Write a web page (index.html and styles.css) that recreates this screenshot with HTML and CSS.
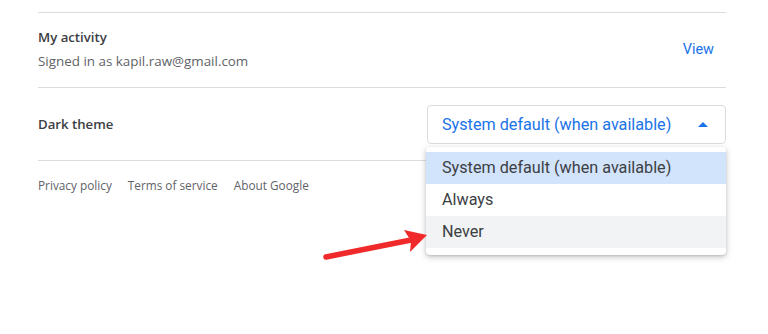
FILE: index.html
```html
<!DOCTYPE html>
<html lang="en">
<head>
  <meta charset="UTF-8" />
  <title>Settings</title>
  <link rel="stylesheet" href="styles.css">
</head>
<body>

<div class="page">
  <div class="row activity">
    <div class="info">
      <div class="title">My activity</div>
      <div class="sub">Signed in as kapil.raw@gmail.com</div>
    </div>
    <a class="link">View</a>
  </div>

  <div class="row theme">
    <div class="title">Dark theme</div>
    <div class="select-wrap">
      <div class="select">
        <span>System default (when available)</span>
        <span class="caret"></span>
      </div>
      <ul class="menu">
        <li class="selected">System default (when available)</li>
        <li>Always</li>
        <li class="hover">Never</li>
      </ul>
    </div>
  </div>

  <div class="footer">
    <a>Privacy policy</a>
    <a>Terms of service</a>
    <a>About Google</a>
  </div>

  <svg class="pointer" width="110" height="40" viewBox="0 0 110 40">
    <line x1="3" y1="32" x2="88" y2="15" stroke="#f02a2a" stroke-width="5.5" stroke-linecap="round"/>
    <polygon points="81,5 104,10 87,27 88,16" fill="#f02a2a"/>
  </svg>
</div>

</body>
</html>
```

FILE: styles.css
```css
html, body {
  height: 100%;
}
body {
  margin: 0;
  background: #fff;
  font-family: Roboto, 'Open Sans', sans-serif;
  color: #3c4043;
}
.page {
  position: relative;
  box-sizing: border-box;
  min-height: 100%;
  padding: 12px 42px 0 38px;
}
.row {
  display: flex;
  align-items: center;
  justify-content: space-between;
  border-top: 1px solid #dadce0;
}
.activity {
  height: 74px;
}
.theme {
  height: 72px;
  border-bottom: 1px solid #dadce0;
}
.title {
  font-family: 'Open Sans', sans-serif;
  font-size: 13.2px;
  font-weight: 600;
  color: #3c4043;
}
.activity .title {
  margin-top: -3px;
}
.sub {
  margin-top: 6px;
  font-family: 'Open Sans', sans-serif;
  font-size: 13.4px;
  color: #5f6368;
}
.link {
  margin-right: 12px;
  margin-top: -1px;
  font-size: 14.5px;
  color: #1a73e8;
}
.select-wrap {
  position: relative;
  margin-top: 1px;
}
.select {
  box-sizing: border-box;
  width: 299px;
  height: 39px;
  padding: 0 16px 0 14px;
  display: flex;
  align-items: center;
  justify-content: space-between;
  border: 1px solid #dadce0;
  border-radius: 4px;
  font-size: 16.2px;
  color: #1a73e8;
}
.caret {
  width: 0;
  height: 0;
  border-left: 5px solid transparent;
  border-right: 5px solid transparent;
  border-bottom: 5px solid #1a73e8;
  margin-right: 1px;
}
.menu {
  position: absolute;
  top: 42px;
  left: -1px;
  width: 300px;
  margin: 0;
  padding: 5px 0 7px;
  list-style: none;
  background: #fff;
  border-radius: 4px;
  box-shadow: 0 2px 6px rgba(60, 64, 67, 0.3), 0 1px 2px rgba(60, 64, 67, 0.15);
}
.menu li {
  height: 32px;
  line-height: 32px;
  padding-left: 16px;
  font-size: 16.2px;
  color: #3c4043;
}
.menu .selected {
  background: #d2e3fc;
}
.menu .hover {
  background: #f1f3f4;
}
.footer {
  display: flex;
  gap: 16px;
  padding-top: 16px;
  font-family: 'Open Sans', sans-serif;
  font-size: 11.8px;
  color: #5f6368;
}
.pointer {
  position: absolute;
  left: 323px;
  top: 225px;
}
```
